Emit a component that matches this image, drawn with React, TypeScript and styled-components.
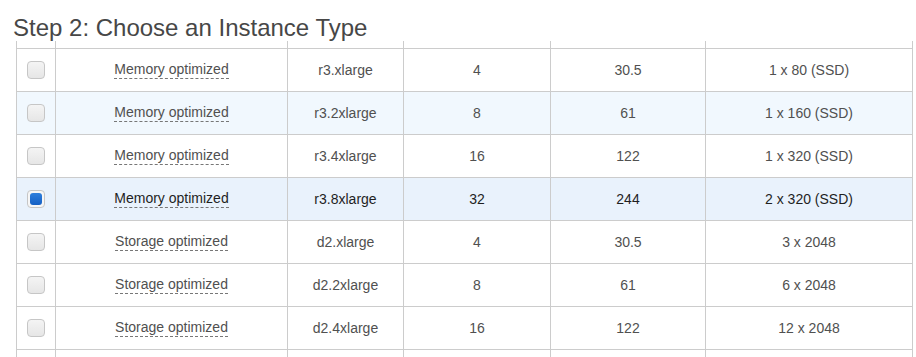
import React from 'react'
import styled, { createGlobalStyle, css } from 'styled-components'

const GlobalStyle = createGlobalStyle`
  html, body {
    margin: 0;
    padding: 0;
    background: #fff;
    font-family: 'Liberation Sans', Arial, sans-serif;
  }
`

const Page = styled.div`
  width: 916px;
  height: 357px;
  overflow: hidden;
`

const Title = styled.h2`
  margin: 0;
  padding: 14px 0 0 13px;
  height: 27px;
  font-size: 24px;
  line-height: 27px;
  font-weight: normal;
  color: #474747;
  white-space: nowrap;
`

const Grid = styled.div`
  margin-left: 16px;
  width: 896px;
  border-right: 1px solid #ccc;
`

const Row = styled.div<{ $bg?: string; $height?: number }>`
  display: grid;
  grid-template-columns: 39px 232px 116px 147px 155px 207px;
  height: ${({ $height }) => $height ?? 42}px;
  border-bottom: 1px solid #ccc;
  background: ${({ $bg }) => $bg ?? '#fff'};
`

const Cell = styled.div<{ $dark?: boolean }>`
  border-left: 1px solid #ccc;
  display: flex;
  align-items: center;
  justify-content: center;
  font-size: 14px;
  color: ${({ $dark }) => ($dark ? '#1f1f1f' : '#505050')};
  white-space: nowrap;
`

const Family = styled.span`
  padding-bottom: 1px;
  border-bottom: 1px dashed #777;
  line-height: 15px;
`

const Check = styled.span<{ $checked?: boolean }>`
  box-sizing: border-box;
  width: 18px;
  height: 18px;
  border-radius: 4px;
  border: 1px solid #c6c6c6;
  background: linear-gradient(#f4f4f4, #e6e6e6);
  display: flex;
  align-items: center;
  justify-content: center;
  ${({ $checked }) =>
    $checked &&
    css`
      background: #f6f6f6;
      &::after {
        content: '';
        width: 12px;
        height: 12px;
        border-radius: 3px;
        background: linear-gradient(#2f7fdc, #1560c4);
      }
    `}
`

const rows = [
  ['Memory optimized', 'r3.xlarge', '4', '30.5', '1 x 80 (SSD)'],
  ['Memory optimized', 'r3.2xlarge', '8', '61', '1 x 160 (SSD)'],
  ['Memory optimized', 'r3.4xlarge', '16', '122', '1 x 320 (SSD)'],
  ['Memory optimized', 'r3.8xlarge', '32', '244', '2 x 320 (SSD)'],
  ['Storage optimized', 'd2.xlarge', '4', '30.5', '3 x 2048'],
  ['Storage optimized', 'd2.2xlarge', '8', '61', '6 x 2048'],
  ['Storage optimized', 'd2.4xlarge', '16', '122', '12 x 2048'],
]

const HOVER_ROW = 1
const SELECTED_ROW = 3

const App = () => {
  return (
    <Page>
      <GlobalStyle />
      <Title>Step 2: Choose an Instance Type</Title>
      <Grid>
        <Row $height={7}>
          {[0, 1, 2, 3, 4, 5].map((i) => (
            <Cell key={i} />
          ))}
        </Row>
        {rows.map((row, index) => {
          const selected = index === SELECTED_ROW
          const bg = selected ? '#e9f2fc' : index === HOVER_ROW ? '#f1f8fe' : undefined
          return (
            <Row key={row[1]} $bg={bg}>
              <Cell>
                <Check $checked={selected} />
              </Cell>
              <Cell $dark={selected}>
                <Family>{row[0]}</Family>
              </Cell>
              <Cell $dark={selected}>{row[1]}</Cell>
              <Cell $dark={selected}>{row[2]}</Cell>
              <Cell $dark={selected}>{row[3]}</Cell>
              <Cell $dark={selected}>{row[4]}</Cell>
            </Row>
          )
        })}
        <Row $height={20}>
          {[0, 1, 2, 3, 4, 5].map((i) => (
            <Cell key={i} />
          ))}
        </Row>
      </Grid>
    </Page>
  )
}

export default App
